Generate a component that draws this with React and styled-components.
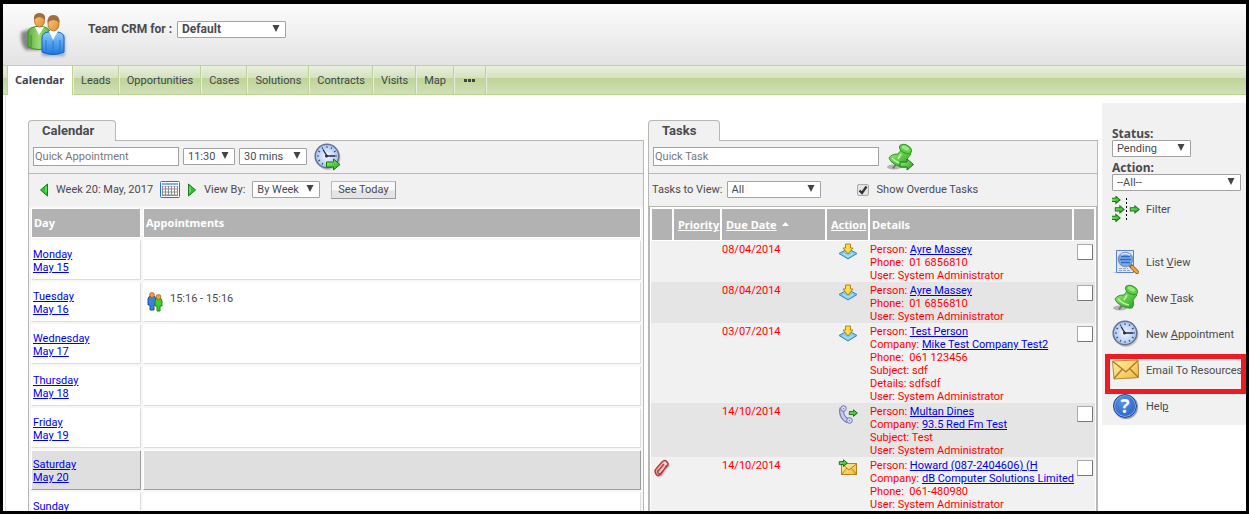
import React from 'react';
import styled, { createGlobalStyle, css } from 'styled-components';

const GlobalStyle = createGlobalStyle`
  * {
    box-sizing: border-box;
  }

  body {
    margin: 0;
    font-family: Roboto, "Noto Sans", sans-serif;
    font-size: 11px;
    line-height: 13px;
    color: #4a4a4f;
    background: #fff;
  }

  input, select, button {
    font: inherit;
    color: inherit;
  }
`;

const Frame = styled.div`
  display: flex;
  flex-direction: column;
  height: 100vh;
  border: 3px solid #000;
  border-top-width: 4px;
  overflow: hidden;
`;

const Header = styled.header`
  display: flex;
  flex: none;
  align-items: flex-start;
  gap: 20px;
  height: 61px;
  padding: 7px 15px;
  background: linear-gradient(#fcfcfc, #e3e3e3);
`;

const TeamField = styled.div`
  display: flex;
  align-items: center;
  gap: 5px;
  padding-top: 10px;
  font-size: 12px;
  font-weight: bold;
`;

const Nav = styled.nav`
  display: flex;
  flex: none;
  height: 30px;
  padding-left: 4px;
  border-top: 1px solid #bed393;
  border-bottom: 1px solid #bed393;
  background: linear-gradient(#e8efdc, #d5e2c0 42%, #bed497 44%, #d0e0b9);
`;

const NavTab = styled.a`
  display: flex;
  align-items: center;
  padding: 1px 7px 0;
  border-right: 1px solid #bed393;
  box-shadow: 1px 0 #e9eee1;
  margin-right: 1px;
  color: #3f4450;
  text-decoration: none;

  ${({ $active }) => $active && css`
    margin-bottom: -1px;
    padding: 0 8px 3px 7px;
    border-left: 1px solid #bed393;
    background: #fff;
    font-family: "Noto Sans", sans-serif;
    font-weight: bold;
  `}
`;

const Main = styled.main`
  display: grid;
  flex: 1;
  grid-template-columns: minmax(0, 616fr) minmax(0, 450fr) 144px;
  gap: 4px;
  align-items: start;
  min-height: 0;
  margin-left: 2px;
  padding-left: 22px;
  border-left: 1px solid #e3e3e3;
  overflow: hidden;
`;

const Panel = styled.section`
  padding-top: 25px;
`;

const PanelTab = styled.h2`
  display: block;
  width: ${({ $width }) => $width}px;
  height: 21px;
  margin: 0 0 -1px;
  padding: 1px 13px;
  position: relative;
  border: 1px solid #b8b8b2;
  border-bottom: 0;
  border-radius: 4px 4px 0 0;
  background: #f1f1f1;
  font-size: 13px;
  line-height: 17px;
`;

const PanelBody = styled.div`
  border: 1px solid #b8b8b2;
  background: #f1f1f1;
`;

const Bar = styled.div`
  display: flex;
  align-items: center;
  gap: 4px;
  height: 32px;
  padding: 0 4px 1px;
`;

const ViewBar = styled(Bar)`
  height: 33px;
  padding: 0 3px 1px;
  border-top: 1px solid #b8b8b2;
`;

const WeekBar = styled(ViewBar)`
  padding-left: 10px;
  gap: 7px;
`;

const TextBox = styled.input`
  width: ${({ $width }) => $width}px;
  height: 19px;
  padding: 0 1px;
  border: 1px solid #a2a2a2;
  background: #fff;

  &::placeholder {
    color: #777;
    opacity: 1;
  }
`;

const SelectWrap = styled.span`
  display: inline-flex;
  position: relative;
  width: ${({ $width }) => $width}px;

  svg {
    position: absolute;
    top: 4px;
    right: 6px;
    pointer-events: none;
  }
`;

const Select = styled.select`
  appearance: none;
  width: 100%;
  height: 17px;
  padding: 0 4px;
  border: 1px solid #a2a2a2;
  border-radius: 1px;
  background: #fff;
  line-height: 15px;
`;

const IconButton = styled.button`
  display: inline-flex;
  padding: 0;
  border: 0;
  background: none;
`;

const AddButton = styled(IconButton)`
  margin-left: 3px;
`;

const TodayButton = styled.button`
  height: 18px;
  margin-left: 4px;
  padding: 0 6px;
  border: 1px solid #999;
  border-top-color: #bbb;
  border-left-color: #bbb;
  background: linear-gradient(#f8f8f8 50%, #e4e4e4 55%);
  line-height: 15px;
`;

const CheckField = styled.span`
  display: flex;
  align-items: center;
  gap: 8px;
  margin-left: 32px;
`;

const Tick = styled.input`
  appearance: none;
  width: 12px;
  height: 12px;
  margin: 0;
  border: 1px solid #aaa;
  border-radius: 2px;
  background: #e4e4e4;

  &:checked {
    background: #e4e4e4 url("data:image/svg+xml,%3Csvg xmlns='http://www.w3.org/2000/svg' viewBox='0 0 10 10'%3E%3Cpath d='M1.5 5.5L4 8L8.500 1.500' fill='none' stroke='%23333' stroke-width='2.200'/%3E%3C/svg%3E");
  }
`;

const WeekTable = styled.table`
  width: 100%;
  table-layout: fixed;
  border-spacing: 2px;
  background: #f7f7f7;
`;

const WeekHead = styled.th`
  width: ${({ $width }) => $width};
  height: 30px;
  padding: 0 2px 1px;
  border: 1px solid #fff;
  background: #b2b2b2;
  color: #fff;
  font-family: "Noto Sans", sans-serif;
  text-align: left;
`;

const WeekCell = styled.td`
  height: 40px;
  padding: 7px 1px 0;
  border: 1px solid #fff;
  border-right-color: #dcdcdc;
  border-bottom-color: #dcdcdc;
  background: #fff;
  vertical-align: top;

  ${({ $today }) => $today && css`
    border-right-color: #9c9c9c;
    border-bottom-color: #9c9c9c;
    background: #dfdfdf;
  `}
`;

const Link = styled.a`
  color: #0000e6;
  text-decoration: underline;
`;

const Appointment = styled.div`
  display: flex;
  gap: 7px;
  padding: 2px 2px 0;
`;

const TaskFrame = styled.div`
  border: 1px solid #b8b8b2;
  padding: 1px;
  background: #fff;
`;

const TaskTable = styled.table`
  width: 100%;
  table-layout: fixed;
  border-collapse: separate;
  border-spacing: 0;
`;

const TaskHead = styled.th`
  width: ${({ $width }) => $width};
  height: 33px;
  padding: 0 0 0 ${({ $plain }) => ($plain ? 2 : 4)}px;
  border: 1px solid #fff;
  background: #b2b2b2;
  color: #fff;
  font-family: "Noto Sans", sans-serif;
  text-align: left;
  white-space: nowrap;

  a {
    color: inherit;
  }

  svg {
    margin: 0 0 3px 5px;
  }
`;

const TaskRow = styled.tr`
  background: #f1f1f1;
  color: #f00;

  &:nth-child(even) {
    background: #e5e5e5;
  }
`;

const TaskCell = styled.td`
  padding: 2px 1px 0;
  vertical-align: top;
  white-space: nowrap;

  svg {
    display: block;
    margin: 0 auto;
  }
`;

const RowCheck = styled.input`
  appearance: none;
  display: block;
  width: 16px;
  height: 16px;
  margin: 1px 0 0 3px;
  border: 1px solid #aaa;
  border-right-color: #777;
  border-bottom-color: #777;
  border-radius: 1px;
  background: #fff;
`;

const Sidebar = styled.aside`
  margin-top: 8px;
  padding: 24px 0 1px 10px;
  background: #f1f1f1;
`;

const SideFields = styled.div`
  display: grid;
  gap: 4px;
`;

const SideField = styled.div`
  display: flex;
  flex-direction: column;

  label {
    font-family: "Noto Sans", sans-serif;
    font-size: 12px;
    font-weight: bold;
  }
`;

const SideLink = styled.a`
  display: flex;
  position: relative;
  align-items: center;
  gap: 6px;
  height: 36px;
  color: inherit;
  text-decoration: none;
  white-space: nowrap;

  svg {
    flex: none;
  }
`;

const FilterLink = styled(SideLink)`
  margin-bottom: 17px;
`;

const Highlight = styled.span`
  position: absolute;
  inset: 2px 0 -6px -7px;
  border: 5px solid #ed1c24;
`;

/* icons */

function IconDefs() {
  return (
    <svg width="0" height="0" style={{ position: 'absolute' }} aria-hidden="true">
      <defs>
        <linearGradient id="green" x1="0" y1="0" x2="1" y2="1">
          <stop offset="0" stopColor="#a4ee7a" />
          <stop offset="1" stopColor="#23a11f" />
        </linearGradient>
        <linearGradient id="coatGreen" x1="0" y1="0" x2="1" y2="0">
          <stop offset="0" stopColor="#5cac3b" />
          <stop offset="0.500" stopColor="#9cda7a" />
          <stop offset="1" stopColor="#63b543" />
        </linearGradient>
        <linearGradient id="coatBlue" x1="0" y1="0" x2="0" y2="1">
          <stop offset="0" stopColor="#90d0ff" />
          <stop offset="1" stopColor="#1c78e0" />
        </linearGradient>
        <linearGradient id="skin" x1="0" y1="0" x2="1" y2="1">
          <stop offset="0" stopColor="#ffc880" />
          <stop offset="1" stopColor="#e08a2c" />
        </linearGradient>
        <linearGradient id="gold" x1="0" y1="0" x2="1" y2="1">
          <stop offset="0" stopColor="#fff0a8" />
          <stop offset="1" stopColor="#f0b93c" />
        </linearGradient>
        <radialGradient id="face">
          <stop offset="0" stopColor="#f4f8ff" />
          <stop offset="1" stopColor="#a5c3f5" />
        </radialGradient>
        <filter id="soft" x="-50%" y="-50%" width="200%" height="200%">
          <feGaussianBlur stdDeviation="1.8" />
        </filter>
      </defs>
    </svg>
  );
}

function TeamIcon() {
  return (
    <svg width="50" height="48" viewBox="0 0 50 48" aria-hidden="true">
      <path d="M3 21l9-3 10 3v18H8q-6-5-5-18z" fill="#333" opacity="0.550" filter="url(#soft)" />
      <path d="M24 24h23v21H24z" fill="#2b5f9c" opacity="0.450" filter="url(#soft)" />
      <path d="M10 36V22q0-5 6-6l5-1 5 1q6 1 6 6v14q-11 5-22 0z" fill="url(#coatGreen)" stroke="#3f8b26" />
      <path d="M17 16l4 8 5-8z" fill="#fff" />
      <path d="M13 24v12M28 24v12" stroke="#3f8b26" fill="none" />
      <ellipse cx="21.500" cy="9.500" rx="5" ry="6.500" fill="url(#skin)" stroke="#a96a25" strokeWidth="0.800" />
      <path d="M16 9q-1-7 5.500-7t5.500 7q-3-3-5.500-3T16 9z" fill="#9a7040" />
      <path d="M24 41V27q0-5 6-6l5-1 5 1q6 1 6 6v14q-11 5-22 0z" fill="url(#coatBlue)" stroke="#1760b8" />
      <path d="M31 20l4 9 5-9z" fill="#fff" />
      <path d="M28 29v13M42 29v13M35 30v13" stroke="#2a78ce" fill="none" />
      <ellipse cx="35.500" cy="13" rx="5.500" ry="7" fill="url(#skin)" stroke="#a96a25" strokeWidth="0.800" />
      <path d="M29.500 12Q29 4 35.500 4t6 8q-3-3-6-3t-6 3z" fill="#9a7040" />
    </svg>
  );
}

function SelectArrow() {
  return (
    <svg width="8" height="7" viewBox="0 0 8 7" aria-hidden="true">
      <path d="M0.500 0h7L4 7z" fill="#444" />
    </svg>
  );
}

function ArrowMark({ x, y, scale = 1 }) {
  return (
    <path
      transform={`translate(${x} ${y}) scale(${scale})`}
      d="M0.500 3.500h7V0.500L14 6l-6.500 5.500v-3h-7z"
      fill="url(#green)"
      stroke="#0d7a12"
      strokeWidth={1 / scale}
    />
  );
}

function ClockIcon({ arrow }) {
  const ticks = [0, 30, 60, 90, 120, 150, 180, 210, 240, 270, 300, 330];
  return (
    <svg width="28" height="28" viewBox="0 0 28 28" aria-hidden="true">
      <circle cx="14" cy="14.500" r="12.500" fill="#999" opacity="0.500" />
      <circle cx="13" cy="13" r="11.800" fill="url(#face)" stroke="#66738c" strokeWidth="1.500" />
      {ticks.map((angle) => (
        <path key={angle} d="M13 3v2" stroke="#3c4a66" transform={`rotate(${angle} 13 13)`} />
      ))}
      <path d="M9 6.500l4 6.500h8" fill="none" stroke="#222a3c" strokeWidth="1.300" />
      <circle cx="12.500" cy="13" r="1.500" fill="#222a3c" />
      {arrow && <ArrowMark x={12} y={15.5} />}
    </svg>
  );
}

function PinIcon({ arrow }) {
  return (
    <svg width="28" height="28" viewBox="0 0 28 28" aria-hidden="true">
      <ellipse cx="8" cy="24" rx="7" ry="2.500" fill="#777" opacity="0.500" />
      <path d="M7 25.500l4-6" stroke="#777" strokeWidth="2" />
      <path d="M3 15q2-4 9-4l4-5 9 5-4 5q2 5-1 8-4 1-10-2-6-3-7-7z" fill="url(#green)" stroke="#2e9a24" />
      <ellipse cx="19.500" cy="6" rx="6.500" ry="4" transform="rotate(27 19.500 6)" fill="#5fd046" stroke="#2e9a24" />
      <ellipse cx="19.500" cy="5" rx="4" ry="2" transform="rotate(27 19.500 5)" fill="#96ea7d" />
      <path d="M15 11l-3 5M6 15q5 5 11 6" fill="none" stroke="#b8f5a0" strokeWidth="1.500" />
      {arrow && <ArrowMark x={13.5} y={15.5} />}
    </svg>
  );
}

function WeekArrow({ next }) {
  return (
    <svg width="10" height="14" viewBox="0 0 10 14" aria-hidden="true">
      <path
        d={next ? 'M1.500 1v12L8.500 7z' : 'M8.500 1v12L1.500 7z'}
        fill="#2ec22e"
        stroke="#17801a"
      />
      <path d={next ? 'M3 3.500v6' : 'M7 3.500v6'} stroke="#91ee85" />
    </svg>
  );
}

function CalendarIcon() {
  return (
    <svg width="20" height="17" viewBox="0 0 20 17" aria-hidden="true">
      <rect x="0.500" y="0.500" width="19" height="16" rx="1" fill="#fff" stroke="#2a6fd6" />
      <path d="M2 2h16v2H2z" fill="#7eaef0" />
      <path d="M2 5h16v10H2z" fill="#8c8c94" />
      <path
        d="M3 6.500h14M3 9.500h14M3 12.500h14"
        stroke="#fff"
        strokeWidth="2"
        strokeDasharray="2 1"
      />
    </svg>
  );
}

function PeopleIcon() {
  return (
    <svg width="16" height="20" viewBox="0 0 16 20" aria-hidden="true">
      <path d="M1 7q0-3 4-3t4 3v6H7v5H3v-5H1z" fill="#3c7fe0" stroke="#234f9c" />
      <circle cx="5" cy="3" r="2.400" fill="#f0a04a" stroke="#a55f16" strokeWidth="0.800" />
      <path d="M8 9q0-3 3.500-3T15 9v5h-2v5h-3v-5H8z" fill="#3fd024" stroke="#25811a" />
      <circle cx="11.500" cy="5" r="2.400" fill="#f0a04a" stroke="#a55f16" strokeWidth="0.800" />
    </svg>
  );
}

function OtherIcon() {
  return (
    <svg width="20" height="17" viewBox="0 0 20 17" aria-hidden="true">
      <path d="M1 10.500l9-5 9 5-9 5.500z" fill="#7cc8ee" stroke="#3f87b5" />
      <path d="M5 10.500l5 3 5-3" fill="none" stroke="#c4ebfc" />
      <path d="M7.500 1h5v4H15l-5 6-5-6h2.500z" fill="#ffdc45" stroke="#b98213" />
    </svg>
  );
}

function PhoneIcon() {
  return (
    <svg width="20" height="20" viewBox="0 0 20 20" aria-hidden="true">
      <path d="M4 3Q2 12 10 16" fill="none" stroke="#6e74b4" strokeWidth="5" />
      <path d="M4 3Q2 12 10 16" fill="none" stroke="#c2c7ea" strokeWidth="3" />
      <circle cx="5.500" cy="3.500" r="2.800" fill="#d4d8f2" stroke="#6e74b4" />
      <circle cx="11.500" cy="15.500" r="2.800" fill="#d4d8f2" stroke="#6e74b4" />
      <path d="M5 3.500h1M11 15.500h1" stroke="#6e74b4" />
      <ArrowMark x={11} y={4.5} scale={0.6} />
    </svg>
  );
}

function MailInIcon() {
  return (
    <svg width="20" height="17" viewBox="0 0 20 17" aria-hidden="true">
      <rect x="3.500" y="4.500" width="15" height="11" fill="url(#gold)" stroke="#b5821f" />
      <path d="M4 5l7 6 7.500-6M4 15l5-6M18 15l-5-6" fill="none" stroke="#b5821f" />
      <ArrowMark x={1} y={0.5} scale={0.6} />
    </svg>
  );
}

function ClipIcon() {
  return (
    <svg width="18" height="19" viewBox="0 0 18 19" aria-hidden="true">
      <path d="M14 6l-6 9q-3 3-5 0t0-5l6-7q3-3 5 0t0 4l-6 7q-2 2-3 0t1-3l5-6" transform="translate(1 1)" fill="none" stroke="#aaa" strokeWidth="1.500" opacity="0.600" />
      <path d="M14 6l-6 9q-3 3-5 0t0-5l6-7q3-3 5 0t0 4l-6 7q-2 2-3 0t1-3l5-6" fill="none" stroke="#c83434" strokeWidth="1.500" />
    </svg>
  );
}

function FilterIcon() {
  return (
    <svg width="28" height="26" viewBox="0 0 28 26" aria-hidden="true">
      <ArrowMark x={-1} y={0} scale={0.65} />
      <ArrowMark x={3} y={9.5} scale={0.65} />
      <ArrowMark x={-1} y={18} scale={0.65} />
      <ArrowMark x={18} y={9.5} scale={0.65} />
      <path d="M14.500 2v22" stroke="#000" strokeDasharray="2 2" />
    </svg>
  );
}

function ListIcon() {
  return (
    <svg width="28" height="26" viewBox="0 0 28 26" aria-hidden="true">
      <path d="M0 24h22v-5z" fill="#888" opacity="0.500" />
      <path d="M4.500 1.500h17v22h-17z" fill="#dbe8ff" stroke="#5b83cc" />
      <path d="M7 19.500h9M7 21.500h12" stroke="#8fa5cf" strokeDasharray="3 1" />
      <path d="M19 17l6 6" stroke="#8a5a1c" strokeWidth="4" strokeLinecap="round" />
      <path d="M20 18l5 5" stroke="#f2a63c" strokeWidth="2.500" strokeLinecap="round" />
      <circle cx="13.500" cy="10.500" r="7" fill="#78aef4" stroke="#8393b3" strokeWidth="1.600" />
      <path d="M9 7.500h9M8 10.500h11M9 13.500h9" stroke="#2f68c4" strokeWidth="1.500" />
      <path d="M9 6q4-3 9 0" stroke="#dcecff" fill="none" strokeWidth="1.500" />
    </svg>
  );
}

function MailIcon() {
  return (
    <svg width="28" height="22" viewBox="0 0 28 22" aria-hidden="true">
      <path d="M3 20l24-1V4z" fill="#777" opacity="0.600" />
      <path d="M0.500 2l25.500-1 0.500 17.500L2 20z" fill="url(#gold)" stroke="#b98a35" />
      <path d="M1 2.500L14 13 26 1.500M2 19.500l8-9M26 18l-8-8" fill="none" stroke="#a8772c" strokeWidth="1.300" />
    </svg>
  );
}

const HelpBadge = styled.span`
  display: flex;
  align-items: center;
  justify-content: center;
  width: 24px;
  height: 24px;
  margin: 0 3px 0 1px;
  border: 1px solid #173f8c;
  border-radius: 50%;
  background: radial-gradient(circle at 40% 30%, #5a92ea, #1e57bd);
  box-shadow: 1px 1px 1px #888, inset 0 0 0 1px #7aa7ee;
  color: #fff;
  font-family: "Open Sans", sans-serif;
  font-size: 19px;
  font-weight: bold;
`;

/* data */

const tabs = ['Calendar', 'Leads', 'Opportunities', 'Cases', 'Solutions', 'Contracts', 'Visits', 'Map'];

const days = [
  { name: 'Monday', date: 'May 15' },
  { name: 'Tuesday', date: 'May 16', appointment: '15:16 - 15:16' },
  { name: 'Wednesday', date: 'May 17' },
  { name: 'Thursday', date: 'May 18' },
  { name: 'Friday', date: 'May 19' },
  { name: 'Saturday', date: 'May 20', today: true },
  { name: 'Sunday' },
];

const user = { label: 'User:', text: 'System Administrator' };

const tasks = [
  {
    due: '08/04/2014',
    Icon: OtherIcon,
    lines: [{ label: 'Person:', link: 'Ayre Massey' }, { label: 'Phone:\u00a0', text: '01 6856810' }, user],
  },
  {
    due: '08/04/2014',
    Icon: OtherIcon,
    lines: [{ label: 'Person:', link: 'Ayre Massey' }, { label: 'Phone:\u00a0', text: '01 6856810' }, user],
  },
  {
    due: '03/07/2014',
    Icon: OtherIcon,
    lines: [
      { label: 'Person:', link: 'Test Person' },
      { label: 'Company:', link: 'Mike Test Company Test2' },
      { label: 'Phone:\u00a0', text: '061 123456' },
      { label: 'Subject:', text: 'sdf' },
      { label: 'Details:', text: 'sdfsdf' },
      user,
    ],
  },
  {
    due: '14/10/2014',
    Icon: PhoneIcon,
    lines: [
      { label: 'Person:', link: 'Multan Dines' },
      { label: 'Company:', link: '93.5 Red Fm Test' },
      { label: 'Subject:', text: 'Test' },
      user,
    ],
  },
  {
    due: '14/10/2014',
    Icon: MailInIcon,
    attached: true,
    lines: [
      { label: 'Person:', link: 'Howard (087-2404606) (H' },
      { label: 'Company:', link: 'dB Computer Solutions Limited' },
      { label: 'Phone:\u00a0', text: '061-480980' },
      user,
    ],
  },
];

function Picker({ id, width, value, label }) {
  return (
    <SelectWrap $width={width}>
      <Select id={id} aria-label={label} defaultValue={value}>
        <option>{value}</option>
      </Select>
      <SelectArrow />
    </SelectWrap>
  );
}

function CalendarPanel() {
  return (
    <Panel>
      <PanelTab $width={88}>Calendar</PanelTab>
      <PanelBody>
        <Bar>
          <TextBox $width={146} placeholder="Quick Appointment" aria-label="Quick Appointment" />
          <Picker width={52} value="11:30" label="Start time" />
          <Picker width={68} value="30 mins" label="Duration" />
          <AddButton aria-label="Add appointment"><ClockIcon arrow /></AddButton>
        </Bar>
        <WeekBar>
          <IconButton aria-label="Previous week"><WeekArrow /></IconButton>
          <span>Week 20: May, 2017</span>
          <IconButton aria-label="Pick a date"><CalendarIcon /></IconButton>
          <IconButton aria-label="Next week"><WeekArrow next /></IconButton>
          <label htmlFor="viewBy">View By:</label>
          <Picker id="viewBy" width={68} value="By Week" />
          <TodayButton>See Today</TodayButton>
        </WeekBar>
        <WeekTable>
          <thead>
            <tr>
              <WeekHead $width="110px">Day</WeekHead>
              <WeekHead>Appointments</WeekHead>
            </tr>
          </thead>
          <tbody>
            {days.map((day) => (
              <tr key={day.name}>
                <WeekCell $today={day.today}>
                  <Link href="#day">{day.name}</Link>
                  <br />
                  {day.date && <Link href="#day">{day.date}</Link>}
                </WeekCell>
                <WeekCell $today={day.today}>
                  {day.appointment && (
                    <Appointment>
                      <PeopleIcon />
                      {day.appointment}
                    </Appointment>
                  )}
                </WeekCell>
              </tr>
            ))}
          </tbody>
        </WeekTable>
      </PanelBody>
    </Panel>
  );
}

function TasksPanel() {
  return (
    <Panel>
      <PanelTab $width={72}>Tasks</PanelTab>
      <PanelBody>
        <Bar>
          <TextBox $width={226} placeholder="Quick Task" aria-label="Quick Task" />
          <AddButton aria-label="Add task"><PinIcon arrow /></AddButton>
        </Bar>
        <ViewBar>
          <label htmlFor="tasksToView">Tasks to View:</label>
          <Picker id="tasksToView" width={94} value="All" />
          <CheckField>
            <Tick type="checkbox" id="overdue" defaultChecked />
            <label htmlFor="overdue">Show Overdue Tasks</label>
          </CheckField>
        </ViewBar>
        <TaskFrame>
          <TaskTable>
            <thead>
              <tr>
                <TaskHead $width="22px" />
                <TaskHead $width="48px"><a href="#priority">Priority</a></TaskHead>
                <TaskHead $width="105px">
                  <a href="#due">Due Date</a>
                  <svg width="7" height="4" viewBox="0 0 7 4" aria-hidden="true">
                    <path d="M0 4h7L3.500 0z" fill="#fff" />
                  </svg>
                </TaskHead>
                <TaskHead $width="43px"><a href="#action">Action</a></TaskHead>
                <TaskHead $plain>Details</TaskHead>
                <TaskHead $width="22px" />
              </tr>
            </thead>
            <tbody>
              {tasks.map(({ due, Icon, attached, lines }, index) => (
                <TaskRow key={index}>
                  <TaskCell>{attached && <ClipIcon />}</TaskCell>
                  <TaskCell />
                  <TaskCell>{due}</TaskCell>
                  <TaskCell><Icon /></TaskCell>
                  <TaskCell>
                    {lines.map(({ label, link, text }) => (
                      <div key={label}>
                        {label}
                        {' '}
                        {link ? <Link href="#task">{link}</Link> : text}
                      </div>
                    ))}
                  </TaskCell>
                  <TaskCell>
                    <RowCheck type="checkbox" aria-label={`Select task ${index + 1}`} />
                  </TaskCell>
                </TaskRow>
              ))}
            </tbody>
          </TaskTable>
        </TaskFrame>
      </PanelBody>
    </Panel>
  );
}

function App() {
  return (
    <>
      <GlobalStyle />
      <IconDefs />
      <Frame>
        <Header>
          <TeamIcon />
          <TeamField>
            <label htmlFor="team">Team CRM for :</label>
            <Picker id="team" width={109} value="Default" />
          </TeamField>
        </Header>
        <Nav>
          {tabs.map((tab, index) => (
            <NavTab key={tab} href="#tab" $active={index === 0}>{tab}</NavTab>
          ))}
          <NavTab href="#more" aria-label="More">
            <svg width="16" height="3" viewBox="-2 0 16 3" aria-hidden="true">
              <path d="M0 0h3v3H0zM4 0h3v3H4zM8 0h3v3H8z" fill="#444" />
            </svg>
          </NavTab>
        </Nav>
        <Main>
          <CalendarPanel />
          <TasksPanel />
          <Sidebar>
            <SideFields>
              <SideField>
                <label htmlFor="status">Status:</label>
                <Picker id="status" width={79} value="Pending" />
              </SideField>
              <SideField>
                <label htmlFor="action">Action:</label>
                <Picker id="action" width={129} value="--All--" />
              </SideField>
            </SideFields>
            <FilterLink href="#filter">
              <FilterIcon />
              Filter
            </FilterLink>
            <SideLink href="#list">
              <ListIcon />
              <span>List <u>V</u>iew</span>
            </SideLink>
            <SideLink href="#task">
              <PinIcon />
              <span>New <u>T</u>ask</span>
            </SideLink>
            <SideLink href="#appointment">
              <ClockIcon />
              <span>New <u>A</u>ppointment</span>
            </SideLink>
            <SideLink href="#email">
              <MailIcon />
              Email To Resources
              <Highlight />
            </SideLink>
            <SideLink href="#help">
              <HelpBadge aria-hidden="true">?</HelpBadge>
              <span>Hel<u>p</u></span>
            </SideLink>
          </Sidebar>
        </Main>
      </Frame>
    </>
  );
}

export default App;
